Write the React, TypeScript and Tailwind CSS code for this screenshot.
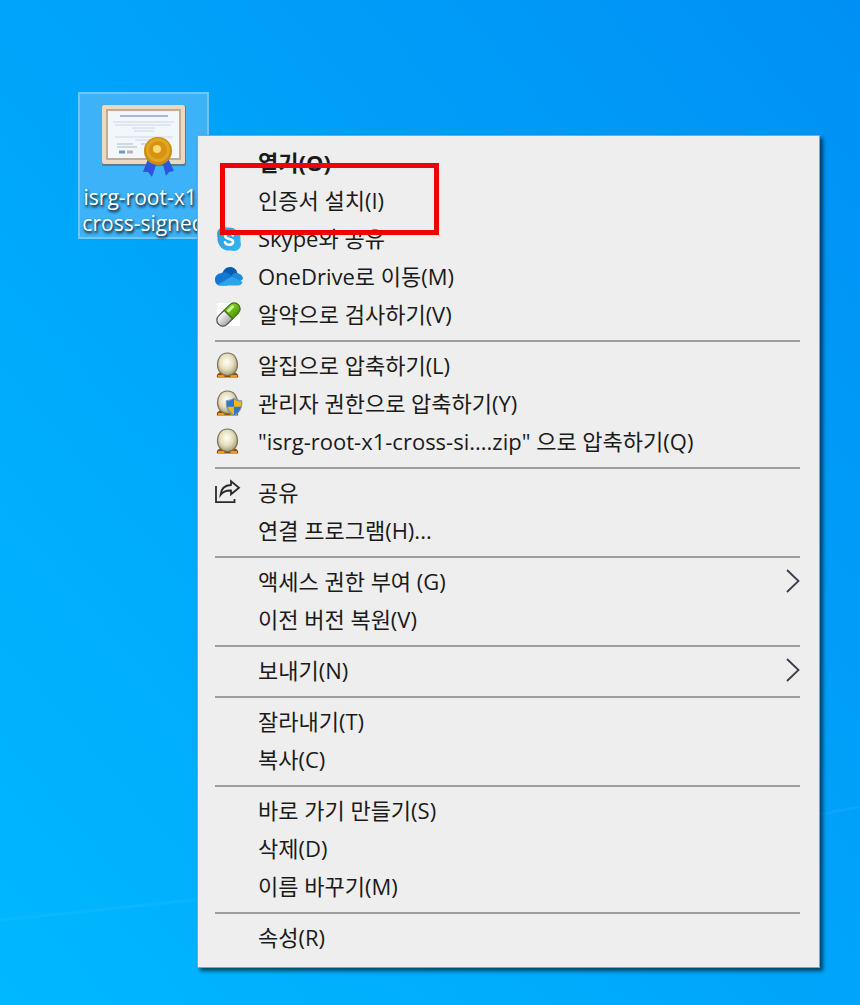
import clsx from "clsx";
import React from "react";

function SkypeIcon() {
  return (
    <svg viewBox="0 0 28 28" className="h-7 w-7">
      <defs>
        <linearGradient id="skype" x1="0" y1="0" x2="1" y2="1">
          <stop offset="0" stopColor="#2f9be0" />
          <stop offset="1" stopColor="#2cb8f5" />
        </linearGradient>
      </defs>
      <circle cx="9" cy="10" r="7" fill="#2f9be0" />
      <circle cx="19" cy="20" r="7" fill="#2cb4f2" />
      <circle cx="14" cy="15" r="11.500" fill="url(#skype)" />
      <path
        d="M17.800 11.400c-.8-1.500-2.100-2.100-3.800-2.100-2.100 0-3.700 1-3.700 2.700 0 4 7.800 1.900 7.800 5.700 0 1.900-1.800 3-4 3-2 0-3.500-.8-4.200-2.500"
        fill="none"
        stroke="#fff"
        strokeWidth="2.500"
        strokeLinecap="round"
      />
    </svg>
  );
}

function OneDriveIcon() {
  return (
    <svg viewBox="0 0 28 28" className="h-7 w-7">
      <path
        d="M7 14C7.500 8 11 5 15 5c4 0 6.500 2.500 7.300 6L17 17z"
        fill="#0a5cb0"
      />
      <path
        d="M5.500 23.500C2.500 23.500 0 21.300 0 17.700 0 14 2.500 11.500 5.800 11.300 8 9.800 11 9.900 13.200 11.500L20 16l-8 7.500z"
        fill="#1478d0"
      />
      <path
        d="M16 14.500c1-2.300 3-3.800 5.500-3.600 1.300 0 2 .4 2.600.8 2.400.8 3.900 2.800 3.900 5.200l-4 3z"
        fill="#1a8ce0"
      />
      <path
        d="M3 22.600C6 21 12 17.500 15.500 15.300c1-.5 1.800-.4 2.500 0l9.600 4.700c-.8 2.200-2.200 3.500-4.400 3.500H5.500c-1 0-1.800-.3-2.500-.9z"
        fill="#29a5ec"
      />
    </svg>
  );
}

function PillIcon() {
  return (
    <svg viewBox="0 0 28 28" className="h-7 w-7">
      <defs>
        <linearGradient id="capsule" x1="0" y1="0" x2="0" y2="1">
          <stop offset="0" stopColor="#fff" />
          <stop offset="1" stopColor="#a5a5a5" />
        </linearGradient>
        <linearGradient id="capsuleGreen" x1="0" y1="0" x2="0" y2="1">
          <stop offset="0" stopColor="#8ed62f" />
          <stop offset="1" stopColor="#4f9a08" />
        </linearGradient>
      </defs>
      <rect x="2" y="3" width="23" height="23" fill="#fff" />
      <g transform="rotate(-45 13.500 14.500)" strokeWidth="1.200">
        <path
          d="M13.500 8.500H5.500a6 6 0 0 0 0 12h8z"
          fill="url(#capsule)"
          stroke="#4c4c4c"
        />
        <path
          d="M13.500 8.500h8a6 6 0 0 1 0 12h-8z"
          fill="url(#capsuleGreen)"
          stroke="#3c7210"
        />
        <path
          d="M16 12h6"
          stroke="#d4f59a"
          strokeWidth="2.500"
          strokeLinecap="round"
        />
      </g>
    </svg>
  );
}

function EggIcon({ shield }: { shield?: boolean }) {
  return (
    <svg viewBox="0 0 28 28" className="h-7 w-7">
      <defs>
        <radialGradient id="egg" cx="0.45" cy="0.4" r="0.65">
          <stop offset="0" stopColor="#fffef2" />
          <stop offset="0.5" stopColor="#e6dfc0" />
          <stop offset="1" stopColor="#a0936a" />
        </radialGradient>
      </defs>
      <path
        d="M2 26.500c-.8-2.500 1-5 4-5h13c3 0 4.700 2.500 4 5z"
        fill="#8a4e0c"
      />
      <path d="M3 25h6.500M15.500 25H22" stroke="#f09a1c" strokeWidth="2" />
      <path
        d="M12.500 2c6.500 0 10 5.500 10 11.500 0 6.500-4 11-10 11s-10-4.500-10-11C2.500 7.500 6 2 12.500 2z"
        fill="url(#egg)"
        stroke="#77725f"
        strokeWidth="1.200"
      />
      {shield && (
        <>
          <path
            d="M19 9c2.500 2 5 2.500 7.700 2.500.8 7-1.700 12.500-7.700 15-6-2.500-8.500-8-7.700-15C14 11.500 16.500 11 19 9z"
            fill="#2d78cc"
            stroke="#8aa3bd"
          />
          <path
            d="M19 10c2 1.600 4.500 2.300 7 2.400.2 2 .1 3.700-.4 5.400H19zM19 17.800v7.900c-3.400-1.500-5.600-4.300-6.500-7.900z"
            fill="#f3b61d"
          />
        </>
      )}
    </svg>
  );
}

function ShareIcon() {
  return (
    <svg
      viewBox="0 0 28 28"
      className="h-7 w-7"
      fill="none"
      stroke="#2b2b2b"
      strokeWidth="1.800"
    >
      <path d="M1 8v16.200h18.500v-3.200" />
      <path d="M16 3.200l8 6.600-8 6.500v-3.800C11 12.300 8 13.500 5.500 17 6 11 10 7.300 16 7z" />
    </svg>
  );
}

function CertificateIcon() {
  return (
    <svg viewBox="0 0 86 80" className="h-20 w-[86px]">
      <rect x="1" y="1" width="84" height="61" rx="2" fill="#6b5a4c" opacity="0.6" />
      <rect x="1" y="1" width="83" height="59" rx="2" fill="#ead9c5" />
      <rect x="5" y="5" width="75" height="51" fill="#c4ac94" />
      <rect x="7" y="7" width="71" height="47" fill="#f2f7fb" />
      <path d="M19 12h48" stroke="#a9b6dc" strokeWidth="2" />
      <path
        d="M12 18h61M14 21h56M31 24h23M33 27h20M14 33h58M34 36h18"
        stroke="#cdd6e6"
        strokeWidth="1"
      />
      <path d="M16 40h16M16 43h20M40 40h14" stroke="#aab7cd" />
      <path d="M18 48h6" stroke="#6f9ac4" strokeWidth="3" />
      <path d="M26 48h6" stroke="#c0aeb6" strokeWidth="3" />
      <path d="M47 55l-5 13 5 0 4 5 5-15z" fill="#2c55dc" />
      <path d="M61 57l4 15 3-4 5-1-6-13z" fill="#2c55dc" />
      <circle cx="57" cy="47" r="14" fill="#c98c14" />
      <circle cx="57" cy="46" r="12" fill="#e3a622" />
      <circle cx="57" cy="46" r="9" fill="#d49412" />
      <circle cx="56" cy="45" r="4" fill="#f9da74" />
    </svg>
  );
}

type Item = {
  label: string;
  icon?: React.ReactNode;
  bold?: boolean;
  submenu?: boolean;
  marked?: boolean;
};

const groups: Item[][] = [
  [
    { label: "열기(O)", bold: true },
    { label: "인증서 설치(I)", marked: true },
    { label: "Skype와 공유", icon: <SkypeIcon /> },
    { label: "OneDrive로 이동(M)", icon: <OneDriveIcon /> },
    { label: "알약으로 검사하기(V)", icon: <PillIcon /> },
  ],
  [
    { label: "알집으로 압축하기(L)", icon: <EggIcon /> },
    { label: "관리자 권한으로 압축하기(Y)", icon: <EggIcon shield /> },
    { label: '"isrg-root-x1-cross-si....zip" 으로 압축하기(Q)', icon: <EggIcon /> },
  ],
  [
    { label: "공유", icon: <ShareIcon /> },
    { label: "연결 프로그램(H)..." },
  ],
  [
    { label: "액세스 권한 부여 (G)", submenu: true },
    { label: "이전 버전 복원(V)" },
  ],
  [{ label: "보내기(N)", submenu: true }],
  [{ label: "잘라내기(T)" }, { label: "복사(C)" }],
  [
    { label: "바로 가기 만들기(S)" },
    { label: "삭제(D)" },
    { label: "이름 바꾸기(M)" },
  ],
  [{ label: "속성(R)" }],
];

function MenuItem({ item }: { item: Item }) {
  return (
    <div className="relative">
      <button
        type="button"
        role="menuitem"
        className={clsx(
          "flex h-[38px] w-full items-center gap-[15px] text-left whitespace-nowrap",
          item.bold && "font-bold"
        )}
      >
        <span className="h-7 w-7 shrink-0">{item.icon}</span>
        <span className="flex-1">{item.label}</span>
        {item.submenu && (
          <svg
            viewBox="0 0 14 24"
            className="h-6 w-[14px]"
            fill="none"
            stroke="#3c3c4c"
            strokeWidth="1.800"
          >
            <path d="M1 1l11.500 11L1 23" />
          </svg>
        )}
      </button>
      {item.marked && (
        <div className="pointer-events-none absolute -top-[18px] left-[5px] z-10 h-[72px] w-[219px] border-[5px] border-[#f20000]" />
      )}
    </div>
  );
}

function App() {
  return (
    <main className="relative min-h-screen overflow-hidden bg-linear-to-tr from-[#00b8ff] via-[#00a4fa] to-[#0090f5] pt-[135px] pr-10 pb-9 pl-[197px] font-['Open_Sans','Noto_Sans_CJK_KR',sans-serif] text-[#1a1a1a]">
      <svg
        viewBox="0 0 860 200"
        preserveAspectRatio="none"
        className="absolute bottom-0 left-0 h-[200px] w-full"
      >
        <path
          d="M0 115C300 85 600 50 860 2"
          fill="none"
          stroke="#4fd0ff"
          strokeWidth="3"
          opacity="0.12"
        />
      </svg>

      <button
        type="button"
        className="absolute top-[92px] left-[78px] flex h-[147px] w-[131px] flex-col items-center border-2 border-[#6fc6fb] bg-[#3db2f8] pt-[10px] text-[21px] leading-[26px] text-white text-shadow-[1px_2px_3px_#000]"
      >
        <CertificateIcon />
        <span className="whitespace-nowrap">
          isrg-root-x1-
          <br />
          cross-signed
        </span>
      </button>

      <div
        role="menu"
        className="relative border border-[#a39c98] bg-[#eeeeee] pt-[7px] pr-[19px] pb-[11px] pl-[17px] text-[22px] leading-[38px] shadow-[3px_3px_4px_rgba(0,0,0,0.6)]"
      >
        {groups.map((group, i) => (
          <React.Fragment key={i}>
            {i > 0 && <hr className="mt-[7px] mb-1 border-t-2 border-[#9d9d9d]" />}
            {group.map((item) => (
              <MenuItem key={item.label} item={item} />
            ))}
          </React.Fragment>
        ))}
      </div>
    </main>
  );
}

export default App;
